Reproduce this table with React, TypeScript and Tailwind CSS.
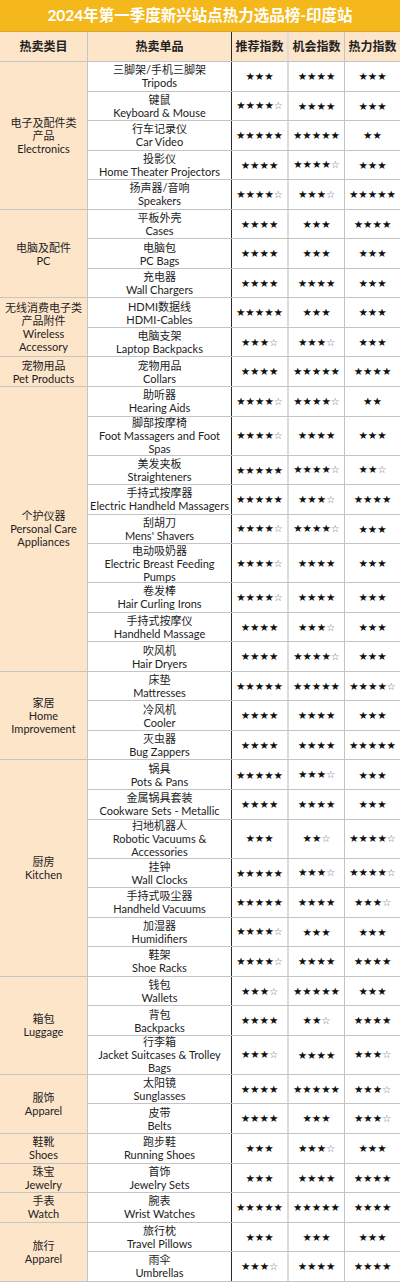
type Row = { cn: string; en: string; s: [string, string, string]; tall?: boolean }
type Group = { label: string[]; rows: Row[] }

const groups: Group[] = [
  {
    label: ['电子及配件类', '产品', 'Electronics'],
    rows: [
      { cn: '三脚架/手机三脚架', en: 'Tripods', s: ['3', '4', '3'] },
      { cn: '键鼠', en: 'Keyboard & Mouse', s: ['4h', '4', '3'] },
      { cn: '行车记录仪', en: 'Car Video', s: ['5', '5', '2'] },
      { cn: '投影仪', en: 'Home Theater Projectors', s: ['4', '4h', '3'] },
      { cn: '扬声器/音响', en: 'Speakers', s: ['4h', '3h', '5'] },
    ],
  },
  {
    label: ['电脑及配件', 'PC'],
    rows: [
      { cn: '平板外壳', en: 'Cases', s: ['4', '3', '4'] },
      { cn: '电脑包', en: 'PC Bags', s: ['4', '3', '3'] },
      { cn: '充电器', en: 'Wall Chargers', s: ['4', '4', '3'] },
    ],
  },
  {
    label: ['无线消费电子类', '产品附件', 'Wireless', 'Accessory'],
    rows: [
      { cn: 'HDMI数据线', en: 'HDMI-Cables', s: ['5', '3', '3'] },
      { cn: '电脑支架', en: 'Laptop Backpacks', s: ['3h', '3h', '3'] },
    ],
  },
  {
    label: ['宠物用品', 'Pet Products'],
    rows: [{ cn: '宠物用品', en: 'Collars', s: ['4', '5', '4'] }],
  },
  {
    label: ['个护仪器', 'Personal Care', 'Appliances'],
    rows: [
      { cn: '助听器', en: 'Hearing Aids', s: ['4h', '4h', '2'] },
      { cn: '脚部按摩椅', en: 'Foot Massagers and Foot Spas', s: ['4h', '4', '3'], tall: true },
      { cn: '美发夹板', en: 'Straighteners', s: ['5', '4h', '2h'] },
      { cn: '手持式按摩器', en: 'Electric Handheld Massagers', s: ['5', '3h', '4'] },
      { cn: '刮胡刀', en: "Mens' Shavers", s: ['4h', '4h', '3'] },
      { cn: '电动吸奶器', en: 'Electric Breast Feeding Pumps', s: ['4h', '4', '3'], tall: true },
      { cn: '卷发棒', en: 'Hair Curling Irons', s: ['4h', '4', '3'] },
      { cn: '手持式按摩仪', en: 'Handheld Massage', s: ['4', '3h', '3'] },
      { cn: '吹风机', en: 'Hair Dryers', s: ['4', '4h', '3'] },
    ],
  },
  {
    label: ['家居', 'Home', 'Improvement'],
    rows: [
      { cn: '床垫', en: 'Mattresses', s: ['5', '5', '4h'] },
      { cn: '冷风机', en: 'Cooler', s: ['4', '4', '3'] },
      { cn: '灭虫器', en: 'Bug Zappers', s: ['4', '4', '5'] },
    ],
  },
  {
    label: ['厨房', 'Kitchen'],
    rows: [
      { cn: '锅具', en: 'Pots & Pans', s: ['5', '3h', '3'] },
      { cn: '金属锅具套装', en: 'Cookware Sets - Metallic', s: ['4', '4', '3'] },
      { cn: '扫地机器人', en: 'Robotic Vacuums & Accessories', s: ['3', '2h', '4h'], tall: true },
      { cn: '挂钟', en: 'Wall Clocks', s: ['5', '3h', '4h'] },
      { cn: '手持式吸尘器', en: 'Handheld Vacuums', s: ['5', '4', '3h'] },
      { cn: '加湿器', en: 'Humidifiers', s: ['4h', '3', '3'] },
      { cn: '鞋架', en: 'Shoe Racks', s: ['4h', '4', '4'] },
    ],
  },
  {
    label: ['箱包', 'Luggage'],
    rows: [
      { cn: '钱包', en: 'Wallets', s: ['3h', '5', '3'] },
      { cn: '背包', en: 'Backpacks', s: ['4', '2h', '4'] },
      { cn: '行李箱', en: 'Jacket Suitcases & Trolley Bags', s: ['3h', '4', '3h'], tall: true },
    ],
  },
  {
    label: ['服饰', 'Apparel'],
    rows: [
      { cn: '太阳镜', en: 'Sunglasses', s: ['4', '5', '3h'] },
      { cn: '皮带', en: 'Belts', s: ['4', '3', '3h'] },
    ],
  },
  {
    label: ['鞋靴', 'Shoes'],
    rows: [{ cn: '跑步鞋', en: 'Running Shoes', s: ['3', '3h', '3'] }],
  },
  {
    label: ['珠宝', 'Jewelry'],
    rows: [{ cn: '首饰', en: 'Jewelry Sets', s: ['3', '4', '4'] }],
  },
  {
    label: ['手表', 'Watch'],
    rows: [{ cn: '腕表', en: 'Wrist Watches', s: ['5', '5', '4'] }],
  },
  {
    label: ['旅行', 'Apparel'],
    rows: [
      { cn: '旅行枕', en: 'Travel Pillows', s: ['3', '3', '3'] },
      { cn: '雨伞', en: 'Umbrellas', s: ['3h', '4', '4'] },
    ],
  },
]

const font = { fontFamily: 'Lato, "Noto Sans CJK SC", sans-serif' }

function Stars({ v }: { v: string }) {
  const n = parseInt(v)
  const half = v.endsWith('h')
  return (
    <span className="font-['DejaVu_Sans'] text-[10.5px] leading-none text-[#111]">
      {'★'.repeat(n)}
      {half && <span className="text-[10px] text-[#666]">☆</span>}
    </span>
  )
}

function ProductRow({ row }: { row: Row }) {
  return (
    <div className={`flex border-b border-[#c4c4c4] ${row.tall ? 'h-[39px]' : 'h-[29.55px]'}`}>
      <div className="w-[144px] shrink-0 border-r border-[#2a2a2a] flex flex-col items-center justify-center text-center text-[11px] leading-[13px] text-[#222]">
        <div>{row.cn}</div>
        <div className={row.tall ? 'px-1' : 'whitespace-nowrap'}>{row.en}</div>
      </div>
      <div className="w-[57px] shrink-0 border-r-2 border-[#dcdcdc] flex items-center justify-center">
        <Stars v={row.s[0]} />
      </div>
      <div className="w-[56px] shrink-0 border-r border-[#c4c4c4] flex items-center justify-center">
        <Stars v={row.s[1]} />
      </div>
      <div className="flex-1 flex items-center justify-center">
        <Stars v={row.s[2]} />
      </div>
    </div>
  )
}

export default function App() {
  return (
    <div className="w-[400px] h-[1286px] bg-white" style={font}>
      <div className="h-[32px] bg-[#f5b81c] flex items-center justify-center text-white font-bold text-[15.5px] border-b border-[#d9a430]">
        2024年第一季度新兴站点热力选品榜-印度站
      </div>
      <div className="h-[30px] flex bg-[#fde5ca] text-[12px] font-bold text-[#222] border-b border-[#c4c4c4]">
        <div className="w-[88px] shrink-0 border-r border-[#c4c4c4] flex items-center justify-center">热卖类目</div>
        <div className="w-[144px] shrink-0 border-r border-[#2a2a2a] flex items-center justify-center">热卖单品</div>
        <div className="w-[57px] shrink-0 border-r-2 border-[#dcdcdc] flex items-center justify-center">推荐指数</div>
        <div className="w-[56px] shrink-0 border-r border-[#c4c4c4] flex items-center justify-center">机会指数</div>
        <div className="flex-1 flex items-center justify-center">热力指数</div>
      </div>
      {groups.map((g, i) => (
        <div key={i} className="flex">
          <div className="w-[88px] shrink-0 bg-[#fde5ca] border-r border-b border-[#c4c4c4] flex flex-col items-center justify-center text-center text-[11px] leading-[13px] text-[#222]">
            {g.label.map((l, j) => (
              <div key={j}>{l}</div>
            ))}
          </div>
          <div className="flex-1 flex flex-col">
            {g.rows.map((r, j) => (
              <ProductRow key={j} row={r} />
            ))}
          </div>
        </div>
      ))}
    </div>
  )
}
